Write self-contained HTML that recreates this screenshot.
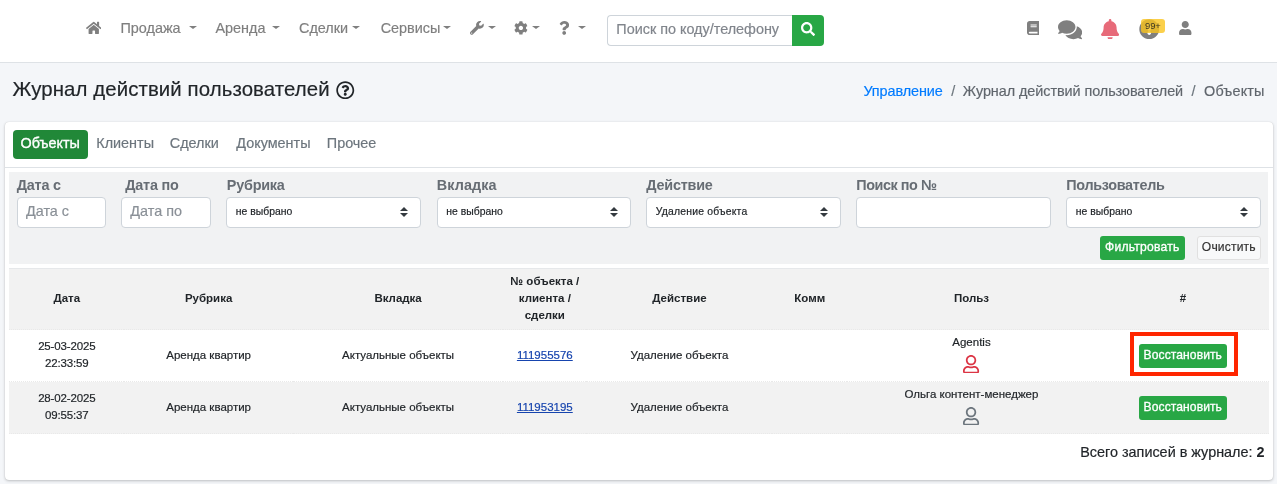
<!DOCTYPE html>
<html lang="ru">
<head>
<meta charset="utf-8">
<title>Журнал действий пользователей</title>
<style>
*{box-sizing:border-box}
html,body{margin:0;padding:0}
body{-webkit-text-stroke:.18px;will-change:transform;width:1277px;height:484px;overflow:hidden;background:#f4f6f9;font-family:"Liberation Sans",sans-serif;font-size:14.4px;color:#212529;position:relative}
svg{display:block}
a{text-decoration:none}
.abs{position:absolute}
/* navbar */
.navbar{position:absolute;left:0;top:0;width:1277px;height:63px;background:#fff;border-bottom:1px solid #dee2e6}
.navbar .item{position:absolute;top:18px;height:20px;line-height:20px;color:#7f7f7f;white-space:nowrap;font-size:14.4px}
.navbar .ico{position:absolute;fill:#7f7f7f}
.caret{position:absolute;top:25.700px;width:0;height:0;border-left:4px solid transparent;border-right:4px solid transparent;border-top:3.700px solid #7f7f7f}
.search{position:absolute;left:607px;top:15px;width:185px;height:31px;border:1px solid #ced4da;border-right:0;border-radius:4px 0 0 4px;background:#fff;color:#8a9097;font-size:14.4px;line-height:27.500px;padding-left:8.300px;white-space:nowrap;overflow:hidden;color:#80858c}
.sbtn{position:absolute;left:792px;top:15px;width:31.5px;height:31px;background:#28a745;border-radius:0 4px 4px 0}
.badge{position:absolute;left:1140.800px;top:19.400px;width:24.200px;height:13.200px;border-radius:3px;background:rgba(250,196,30,.8);color:#3a3420;font-size:9.400px;line-height:13.200px;text-align:center;-webkit-text-stroke:0}
/* header */
h1{position:absolute;left:12.500px;top:76px;margin:0;font-size:20.4px;font-weight:400;line-height:26px;color:#212529;white-space:nowrap;letter-spacing:.1px}
.bc{position:absolute;right:12.500px;top:82px;line-height:18px;font-size:14.400px;color:#60666d;white-space:nowrap}
.bc a{color:#007bff}
.bc .sep{padding:0 8.5px;color:#6c757d}
/* card */
.card{position:absolute;left:4.800px;top:122px;width:1268px;height:358px;background:#fff;border-radius:4px;box-shadow:0 0 1px rgba(0,0,0,.18),0 1px 3px rgba(0,0,0,.22)}
.tabs{position:absolute;left:0;top:0;width:1268px;height:46px;border-bottom:1px solid #dee2e6}
.tab{position:absolute;top:8px;height:28.600px;line-height:26.400px;color:#6c757d;font-size:14.4px;white-space:nowrap}
.tab.active{left:8px;width:75px;background:#218838;color:#fff;-webkit-text-stroke:.35px;border-radius:4px;text-align:center}
.filter{position:absolute;left:4.500px;top:50px;width:1259px;height:91.7px;background:#f1f2f3}
.filter label{-webkit-text-stroke:0;position:absolute;top:4px;font-weight:700;color:#676d74;font-size:14.400px;line-height:18px;white-space:nowrap;letter-spacing:-.22px}
.inp{position:absolute;top:25.400px;height:30.300px;border:1px solid #ced4da;border-radius:4px;background:#fff;color:#8a9097;font-size:14.4px;line-height:27px;padding-left:8px;white-space:nowrap;overflow:hidden}
.sel{color:#212529;font-size:10.400px;padding-left:8.500px;line-height:27px}
.sel svg{position:absolute;right:12.300px;top:8.600px}
.btn{position:absolute;height:23.4px;line-height:23.4px;border-radius:3px;font-size:12.1px;text-align:center;white-space:nowrap}
.btn.g{background:#28a745;color:#fff;-webkit-text-stroke:.3px;letter-spacing:.08px}
.btn.w{background:#f8f9fa;border:1px solid #e0e0e0;color:#333;line-height:21.4px}
/* table */
table{position:absolute;left:4.500px;top:146px;width:1259.3px;border-collapse:collapse;table-layout:fixed;font-size:11.5px;line-height:17px;color:#212529;text-align:center}
th{-webkit-text-stroke:0;font-weight:700;height:61px;padding:0 0 1px;background:#f2f2f2;border-top:1px solid #e6e8ea;vertical-align:middle;color:#212529}
td{height:52px;padding:0 0 1px;vertical-align:middle;border-top:1px dotted #e9e9e9}
tr.odd td{background:#f2f2f2;border-bottom:1px dotted #e9e9e9}
td a{color:#1644ae;text-decoration:underline}
.uico{margin:4px auto 0;}
td.dt{letter-spacing:-.15px}
td.user{vertical-align:top;padding:4px 0 0}
b{-webkit-text-stroke:0}
.total{position:absolute;right:8.300px;top:320.700px;font-size:14.4px;line-height:18px;color:#212529;white-space:nowrap}
.hl{position:absolute;left:1125.700px;top:210px;width:107.200px;height:44.200px;border:4.200px solid #ff2600}
</style>
</head>
<body>
<nav class="navbar">
  <svg class="ico" style="left:85.5px;top:21px" width="15.5" height="13.8" viewBox="0 0 576 512"><path d="M280.37 148.26L96 300.11V464a16 16 0 0 0 16 16l112.06-.29a16 16 0 0 0 15.92-16V368a16 16 0 0 1 16-16h64a16 16 0 0 1 16 16v95.64a16 16 0 0 0 16 16.05L464 480a16 16 0 0 0 16-16V300L295.67 148.26a12.19 12.19 0 0 0-15.3 0zM571.6 251.47L488 182.56V44.05a12 12 0 0 0-12-12h-56a12 12 0 0 0-12 12v72.61L318.47 43a48 48 0 0 0-61 0L4.34 251.47a12 12 0 0 0-1.6 16.9l25.5 31A12 12 0 0 0 45.15 301l235.22-193.74a12.19 12.19 0 0 1 15.3 0L530.9 301a12 12 0 0 0 16.9-1.6l25.5-31a12 12 0 0 0-1.7-16.93z"/></svg>
  <span class="item" style="left:120.5px">Продажа</span><i class="caret" style="left:189px"></i>
  <span class="item" style="left:215.5px">Аренда</span><i class="caret" style="left:272px"></i>
  <span class="item" style="left:299px">Сделки</span><i class="caret" style="left:352px"></i>
  <span class="item" style="left:380.7px">Сервисы</span><i class="caret" style="left:442.500px"></i>
  <svg class="ico" style="left:470px;top:21px" width="13.8" height="13.8" viewBox="0 0 512 512"><path d="M507.73 109.1c-2.24-9.03-13.54-12.09-20.12-5.51l-74.36 74.36-67.88-11.31-11.31-67.88 74.36-74.36c6.62-6.62 3.43-17.9-5.66-20.16-47.38-11.74-99.55.91-136.58 37.93-39.64 39.64-50.55 97.1-34.05 147.2L18.74 402.76c-24.99 24.99-24.99 65.51 0 90.5 24.99 24.99 65.51 24.99 90.5 0l213.21-213.21c50.12 16.71 107.47 5.68 147.37-34.22 37.07-37.07 49.7-89.32 37.91-136.73zM64 472c-13.25 0-24-10.75-24-24 0-13.26 10.75-24 24-24s24 10.74 24 24c0 13.25-10.75 24-24 24z"/></svg><i class="caret" style="left:487.5px"></i>
  <svg class="ico" style="left:514px;top:21px" width="13.8" height="13.8" viewBox="0 0 512 512"><path d="M487.4 315.7l-42.6-24.6c4.3-23.2 4.3-47 0-70.2l42.6-24.6c4.9-2.8 7.1-8.6 5.5-14-11.1-35.6-30-67.8-54.7-94.6-3.8-4.1-10-5.1-14.8-2.3L380.8 110c-17.9-15.4-38.5-27.3-60.8-35.1V25.800c0-5.600-3.900-10.500-9.400-11.700-36.700-8.200-74.300-7.800-109.200 0-5.500 1.200-9.400 6.100-9.400 11.700V75c-22.200 7.900-42.800 19.800-60.800 35.100L88.700 85.500c-4.900-2.800-11-1.900-14.800 2.300-24.700 26.700-43.600 58.900-54.700 94.600-1.700 5.400.6 11.200 5.500 14L67.300 221c-4.300 23.200-4.300 47 0 70.200l-42.600 24.600c-4.900 2.800-7.100 8.600-5.500 14 11.100 35.600 30 67.800 54.700 94.600 3.800 4.100 10 5.100 14.800 2.300l42.600-24.600c17.900 15.400 38.500 27.300 60.800 35.100v49.200c0 5.600 3.900 10.500 9.400 11.700 36.700 8.200 74.300 7.800 109.200 0 5.500-1.200 9.400-6.100 9.400-11.700v-49.200c22.200-7.900 42.800-19.800 60.800-35.100l42.600 24.600c4.900 2.800 11 1.900 14.800-2.300 24.700-26.700 43.600-58.900 54.700-94.600 1.500-5.500-.7-11.300-5.600-14.100zM256 336c-44.100 0-80-35.900-80-80s35.900-80 80-80 80 35.900 80 80-35.900 80-80 80z"/></svg><i class="caret" style="left:531.5px"></i>
  <svg class="ico" style="left:558.5px;top:21px" width="10.4" height="13.8" viewBox="0 0 384 512"><path d="M202.021 0C122.202 0 70.503 32.703 29.914 91.026c-7.363 10.58-5.093 25.086 5.178 32.874l43.138 32.709c10.373 7.865 25.132 6.026 33.253-4.148 25.049-31.381 43.630-49.449 82.757-49.449 30.764 0 68.816 19.799 68.816 49.631 0 22.552-18.617 34.134-48.993 51.164-35.423 19.86-82.299 44.576-82.299 106.405V320c0 13.255 10.745 24 24 24h72.471c13.255 0 24-10.745 24-24v-5.773c0-42.86 125.268-44.645 125.268-160.627C377.504 66.256 286.902 0 202.021 0zM192 373.459c-38.196 0-69.271 31.075-69.271 69.271 0 38.195 31.075 69.27 69.271 69.270s69.271-31.075 69.271-69.271-31.075-69.27-69.271-69.27z"/></svg><i class="caret" style="left:577.5px"></i>
  <div class="search">Поиск по коду/телефону</div>
  <div class="sbtn"><svg style="position:absolute;left:8.500px;top:7.200px;fill:#fff" width="14" height="14" viewBox="0 0 512 512"><path d="M505 442.7L405.3 343c-4.5-4.5-10.6-7-17-7H372c27.6-35.3 44-79.7 44-128C416 93.1 322.9 0 208 0S0 93.1 0 208s93.100 208 208 208c48.300 0 92.700-16.400 128-44v16.300c0 6.400 2.500 12.500 7 17l99.700 99.700c9.400 9.400 24.600 9.400 33.900 0l28.300-28.300c9.400-9.400 9.400-24.600.1-34zM208 336c-70.700 0-128-57.200-128-128 0-70.700 57.200-128 128-128 70.700 0 128 57.200 128 128 0 70.700-57.200 128-128 128z"/></svg></div>
  <svg class="ico" style="left:1027px;top:20.7px" width="12.4" height="14.2" viewBox="0 0 448 512"><path d="M448 360V24c0-13.3-10.700-24-24-24H96C43 0 0 43 0 96v320c0 53 43 96 96 96h328c13.300 0 24-10.700 24-24v-16c0-7.500-3.500-14.300-8.900-18.700-4.200-15.400-4.200-59.300 0-74.700 5.400-4.300 8.900-11.100 8.900-18.600zM128 134c0-3.300 2.700-6 6-6h212c3.300 0 6 2.700 6 6v20c0 3.300-2.700 6-6 6H134c-3.300 0-6-2.700-6-6v-20zm0 64c0-3.300 2.700-6 6-6h212c3.300 0 6 2.700 6 6v20c0 3.300-2.700 6-6 6H134c-3.300 0-6-2.700-6-6v-20zm253.400 250H96c-17.700 0-32-14.300-32-32 0-17.600 14.400-32 32-32h285.400c-1.900 17.100-1.900 46.900 0 64z"/></svg>
  <svg class="ico" style="left:1058.2px;top:18.5px" width="24.2" height="21.5" viewBox="0 0 576 512"><path d="M416 192c0-88.400-93.100-160-208-160S0 103.600 0 192c0 34.300 14.100 65.900 38 92-13.400 30.200-35.500 54.200-35.800 54.500-2.200 2.300-2.800 5.700-1.500 8.700S4.800 352 8 352c36.600 0 66.900-12.300 88.700-25 32.200 15.700 70.300 25 111.300 25 114.900 0 208-71.600 208-160zm122 220c23.900-26 38-57.700 38-92 0-66.900-53.500-124.200-129.300-148.100.9 6.600 1.300 13.300 1.300 20.100 0 105.900-107.700 192-240 192-10.800 0-21.300-.8-31.700-1.900C207.800 439.600 281.800 480 368 480c41 0 79.100-9.200 111.300-25 21.800 12.700 52.100 25 88.700 25 3.200 0 6.100-1.900 7.300-4.800 1.300-2.900.7-6.300-1.500-8.700-.3-.3-22.400-24.200-35.800-54.500z"/></svg>
  <svg class="ico" style="left:1101.300px;top:18.600px;fill:#e76a79" width="18.200" height="20.800" viewBox="0 0 448 512"><path d="M224 512c35.320 0 63.970-28.650 63.970-64H160.030c0 35.350 28.650 64 63.970 64zm215.390-149.710c-19.320-20.760-55.470-51.990-55.470-154.290 0-77.700-54.480-139.900-127.940-155.160V32c0-17.670-14.320-32-31.980-32s-31.980 14.330-31.980 32v20.840C118.560 68.100 64.080 130.300 64.080 208c0 102.300-36.150 133.530-55.470 154.290-6 6.450-8.660 14.160-8.610 21.710.11 16.400 12.980 32 32.100 32h383.800c19.120 0 32-15.600 32.100-32 .05-7.550-2.610-15.270-8.610-21.710z"/></svg>
  <svg class="ico" style="left:1139.300px;top:18.700px" width="20.500" height="20.500" viewBox="0 0 512 512"><path d="M504 256c0 136.997-111.043 248-248 248S8 392.997 8 256C8 119.083 119.043 8 256 8s248 111.083 248 248zm-248 50c-25.405 0-46 20.595-46 46s20.595 46 46 46 46-20.595 46-46-20.595-46-46-46zm-43.673-165.346l7.418 136c.347 6.364 5.609 11.346 11.982 11.346h48.546c6.373 0 11.635-4.982 11.982-11.346l7.418-136c.375-6.874-5.098-12.654-11.982-12.654h-63.383c-6.884 0-12.356 5.780-11.981 12.654z"/></svg>
  <span class="badge">99+</span>
  <svg class="ico" style="left:1179.2px;top:20.7px" width="12.5" height="14.2" viewBox="0 0 448 512"><path d="M224 256c70.700 0 128-57.300 128-128S294.700 0 224 0 96 57.300 96 128s57.300 128 128 128zm89.600 32h-16.700c-22.200 10.200-46.900 16-72.900 16s-50.600-5.800-72.900-16h-16.700C60.200 288 0 348.200 0 422.400V464c0 26.500 21.500 48 48 48h352c26.500 0 48-21.500 48-48v-41.600c0-74.200-60.200-134.400-134.400-134.400z"/></svg>
</nav>

<h1>Журнал действий пользователей</h1>
<svg class="abs" style="left:336px;top:80.800px;fill:#212529" width="18.500" height="18.500" viewBox="0 0 512 512"><path d="M256 8C119.043 8 8 119.083 8 256c0 136.997 111.043 248 248 248s248-111.003 248-248C504 119.083 392.957 8 256 8zm0 448c-110.532 0-200-89.431-200-200 0-110.495 89.472-200 200-200 110.491 0 200 89.471 200 200 0 110.53-89.431 200-200 200zm107.244-255.200c0 67.052-72.421 68.084-72.421 92.863V300c0 6.627-5.373 12-12 12h-45.647c-6.627 0-12-5.373-12-12v-8.659c0-35.745 27.1-50.034 47.579-61.516 17.561-9.845 28.324-16.541 28.324-29.579 0-17.246-21.999-28.693-39.784-28.693-23.189 0-33.894 10.977-48.942 29.969-4.057 5.12-11.46 6.071-16.666 2.124l-27.824-21.098c-5.107-3.872-6.251-11.066-2.644-16.363C184.846 131.491 214.94 112 261.794 112c49.071 0 101.45 38.304 101.45 88.800zM298 368c0 23.159-18.841 42-42 42s-42-18.841-42-42 18.841-42 42-42 42 18.841 42 42z"/></svg>
<div class="bc"><a style="letter-spacing:-.08px">Управление</a><span class="sep" style="padding-right:7.700px">/</span><span style="letter-spacing:-.055px">Журнал действий пользователей</span><span class="sep">/</span><span style="letter-spacing:.15px">Объекты</span></div>

<div class="card">
  <div class="tabs">
    <span class="tab active">Объекты</span>
    <span class="tab" style="left:91.5px">Клиенты</span>
    <span class="tab" style="left:165px">Сделки</span>
    <span class="tab" style="left:231.5px">Документы</span>
    <span class="tab" style="left:322px">Прочее</span>
  </div>
  <div class="filter">
    <label style="left:7.5px">Дата с</label>
    <label style="left:116px">Дата по</label>
    <label style="left:217.5px">Рубрика</label>
    <label style="left:427.500px;letter-spacing:.07px">Вкладка</label>
    <label style="left:637px">Действие</label>
    <label style="left:847px;letter-spacing:-.45px">Поиск по №</label>
    <label style="left:1057px;letter-spacing:-.32px">Пользователь</label>
    <div class="inp" style="left:7.700px;width:89.300px">Дата с</div>
    <div class="inp" style="left:112px;width:89.800px">Дата по</div>
    <div class="inp sel" style="left:217px;width:194.5px">не выбрано<svg width="8" height="10" viewBox="0 0 8 10"><path d="M0 4L4 0l4 4zM0 6h8L4 10z" fill="#343a40"/></svg></div>
    <div class="inp sel" style="left:427.5px;width:194.5px">не выбрано<svg width="8" height="10" viewBox="0 0 8 10"><path d="M0 4L4 0l4 4zM0 6h8L4 10z" fill="#343a40"/></svg></div>
    <div class="inp sel" style="left:637px;width:194.500px;letter-spacing:.2px">Удаление объекта<svg width="8" height="10" viewBox="0 0 8 10"><path d="M0 4L4 0l4 4zM0 6h8L4 10z" fill="#343a40"/></svg></div>
    <div class="inp" style="left:847px;width:194.5px"></div>
    <div class="inp sel" style="left:1057px;width:194.5px">не выбрано<svg width="8" height="10" viewBox="0 0 8 10"><path d="M0 4L4 0l4 4zM0 6h8L4 10z" fill="#343a40"/></svg></div>
    <span class="btn g" style="left:1090.500px;top:64px;width:85px;height:23.600px;letter-spacing:.25px">Фильтровать</span>
    <span class="btn w" style="left:1187.500px;top:64px;width:64px;height:23.600px;letter-spacing:.15px">Очистить</span>
  </div>
  <table>
    <colgroup><col style="width:115px"><col style="width:168.7px"><col style="width:210.2px"><col style="width:83.3px"><col style="width:186px"><col style="width:74.6px"><col style="width:248.8px"><col></colgroup>
    <thead><tr><th>Дата</th><th>Рубрика</th><th>Вкладка</th><th>№ объекта /<br>клиента /<br>сделки</th><th>Действие</th><th>Комм</th><th>Польз</th><th style="padding-left:1.500px">#</th></tr></thead>
    <tbody>
      <tr><td class="dt">25-03-2025<br>22:33:59</td><td>Аренда квартир</td><td>Актуальные объекты</td><td><a>111955576</a></td><td>Удаление объекта</td><td></td><td class="user">Agentis<svg class="uico" width="16.100" height="18.400" viewBox="0 0 448 512" fill="#dc3545"><path d="M313.6 304c-28.700 0-42.500 16-89.600 16-47.100 0-60.800-16-89.600-16C60.200 304 0 364.200 0 438.400V464c0 26.500 21.500 48 48 48h352c26.500 0 48-21.500 48-48v-25.600c0-74.200-60.200-134.400-134.400-134.400zM400 464H48v-25.600c0-47.600 38.800-86.400 86.400-86.400 14.600 0 38.300 16 89.600 16 51.700 0 74.900-16 89.600-16 47.600 0 86.400 38.800 86.400 86.400V464zM224 288c79.500 0 144-64.500 144-144S303.500 0 224 0 80 64.500 80 144s64.500 144 144 144zm0-240c52.900 0 96 43.100 96 96s-43.100 96-96 96-96-43.100-96-96 43.100-96 96-96z"/></svg></td><td></td></tr>
      <tr class="odd"><td class="dt">28-02-2025<br>09:55:37</td><td>Аренда квартир</td><td>Актуальные объекты</td><td><a>111953195</a></td><td>Удаление объекта</td><td></td><td class="user">Ольга контент-менеджер<svg class="uico" width="16.100" height="18.400" viewBox="0 0 448 512" fill="#6c757d"><path d="M313.6 304c-28.700 0-42.500 16-89.600 16-47.100 0-60.800-16-89.600-16C60.200 304 0 364.200 0 438.400V464c0 26.500 21.500 48 48 48h352c26.500 0 48-21.500 48-48v-25.600c0-74.200-60.200-134.400-134.400-134.400zM400 464H48v-25.600c0-47.600 38.800-86.400 86.400-86.400 14.600 0 38.300 16 89.600 16 51.700 0 74.900-16 89.600-16 47.600 0 86.400 38.800 86.400 86.400V464zM224 288c79.500 0 144-64.500 144-144S303.500 0 224 0 80 64.500 80 144s64.500 144 144 144zm0-240c52.900 0 96 43.100 96 96s-43.100 96-96 96-96-43.100-96-96 43.100-96 96-96z"/></svg></td><td></td></tr>
    </tbody>
  </table>
  <span class="btn g" style="left:1134px;top:222.200px;width:88px">Восстановить</span>
  <span class="btn g" style="left:1134px;top:274.200px;width:88px">Восстановить</span>
  <div class="hl"></div>
  <div class="total">Всего записей в журнале: <b>2</b></div>
</div>
</body>
</html>
